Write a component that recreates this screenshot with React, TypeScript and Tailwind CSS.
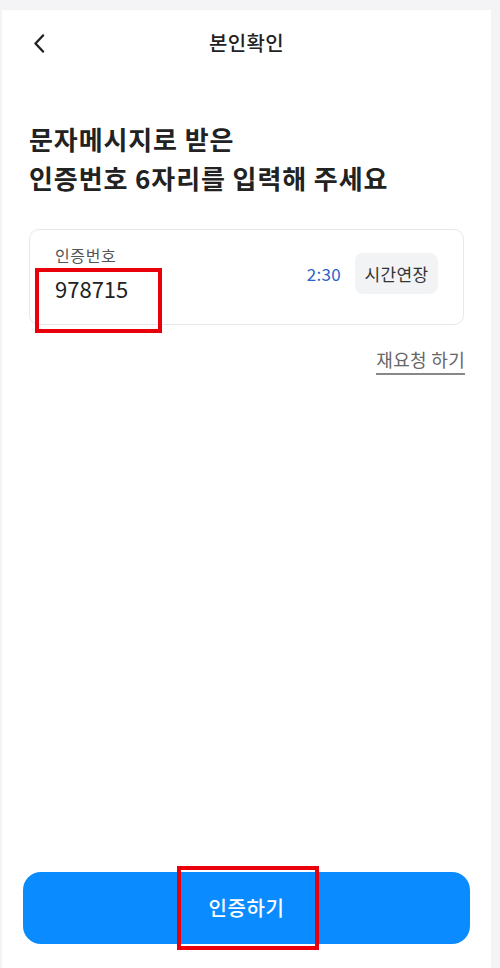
export default function App() {
  return (
    <div
      className="relative w-[500px] h-[968px] bg-[#f4f4f6] pl-[2px] pr-[9px] pt-[10px] overflow-hidden"
      style={{ fontFamily: '"Noto Sans CJK KR", "Noto Sans", sans-serif' }}
    >
      <div className="flex flex-col h-full bg-white">
        {/* Header */}
        <div className="relative flex items-center justify-center h-[66px]">
          <button className="absolute left-[30px] top-[23px] w-[14px] h-[20px] flex items-center justify-center">
            <svg width="12" height="19" viewBox="0 0 12 19" fill="none">
              <path d="M10 1.5 L2.5 9.5 L10 17.5" stroke="#222" strokeWidth="2.4" strokeLinecap="round" strokeLinejoin="round" />
            </svg>
          </button>
          <h1 className="text-[20px] font-medium text-[#222] tracking-[0.3px]">본인확인</h1>
        </div>

        {/* Heading */}
        <div className="px-[27px] pt-[43px]">
          <h2 className="text-[26px] leading-[39px] font-bold text-[#222] tracking-[0.9px]">
            문자메시지로 받은
            <br />
            인증번호 6자리를 입력해 주세요
          </h2>
        </div>

        {/* Input card */}
        <div className="mx-[27px] mt-[32px] h-[96px] rounded-[10px] border border-[#e6e8eb] flex items-center pl-[25px] pr-[25px]">
          <div className="flex flex-col flex-1">
            <span className="text-[16px] leading-[20px] text-[#555] tracking-[0.6px] mt-[-6px]">인증번호</span>
            <span className="text-[22px] leading-[30px] text-[#222] mt-[8px]">978715</span>
          </div>
          <span className="text-[17px] text-[#2a62c9] tracking-[0.3px] mr-[14px] mt-[-7px]">2:30</span>
          <button className="w-[83px] h-[41px] rounded-[8px] bg-[#f1f3f5] text-[17px] text-[#333] tracking-[0.3px] mt-[-7px]">
            시간연장
          </button>
        </div>

        {/* Re-request */}
        <div className="flex justify-end px-[26px] mt-[22px]">
          <span className="text-[18px] leading-[24px] text-[#666] tracking-[0.3px] border-b-2 border-[#888] pb-[2px]">
            재요청 하기
          </span>
        </div>

        {/* Submit */}
        <div className="mt-auto px-[21px] pb-[24px]">
          <button className="w-full h-[72px] rounded-[18px] bg-[#0a8bff] text-white text-[20px] font-medium tracking-[0.6px]">
            인증하기
          </button>
        </div>
      </div>

      {/* Annotation boxes */}
      <div className="absolute left-[35px] top-[268px] w-[127px] h-[65px] border-[4px] border-[#e8000b]" />
      <div className="absolute left-[177px] top-[866px] w-[142px] h-[84px] border-[4px] border-[#e8000b]" />
    </div>
  );
}
